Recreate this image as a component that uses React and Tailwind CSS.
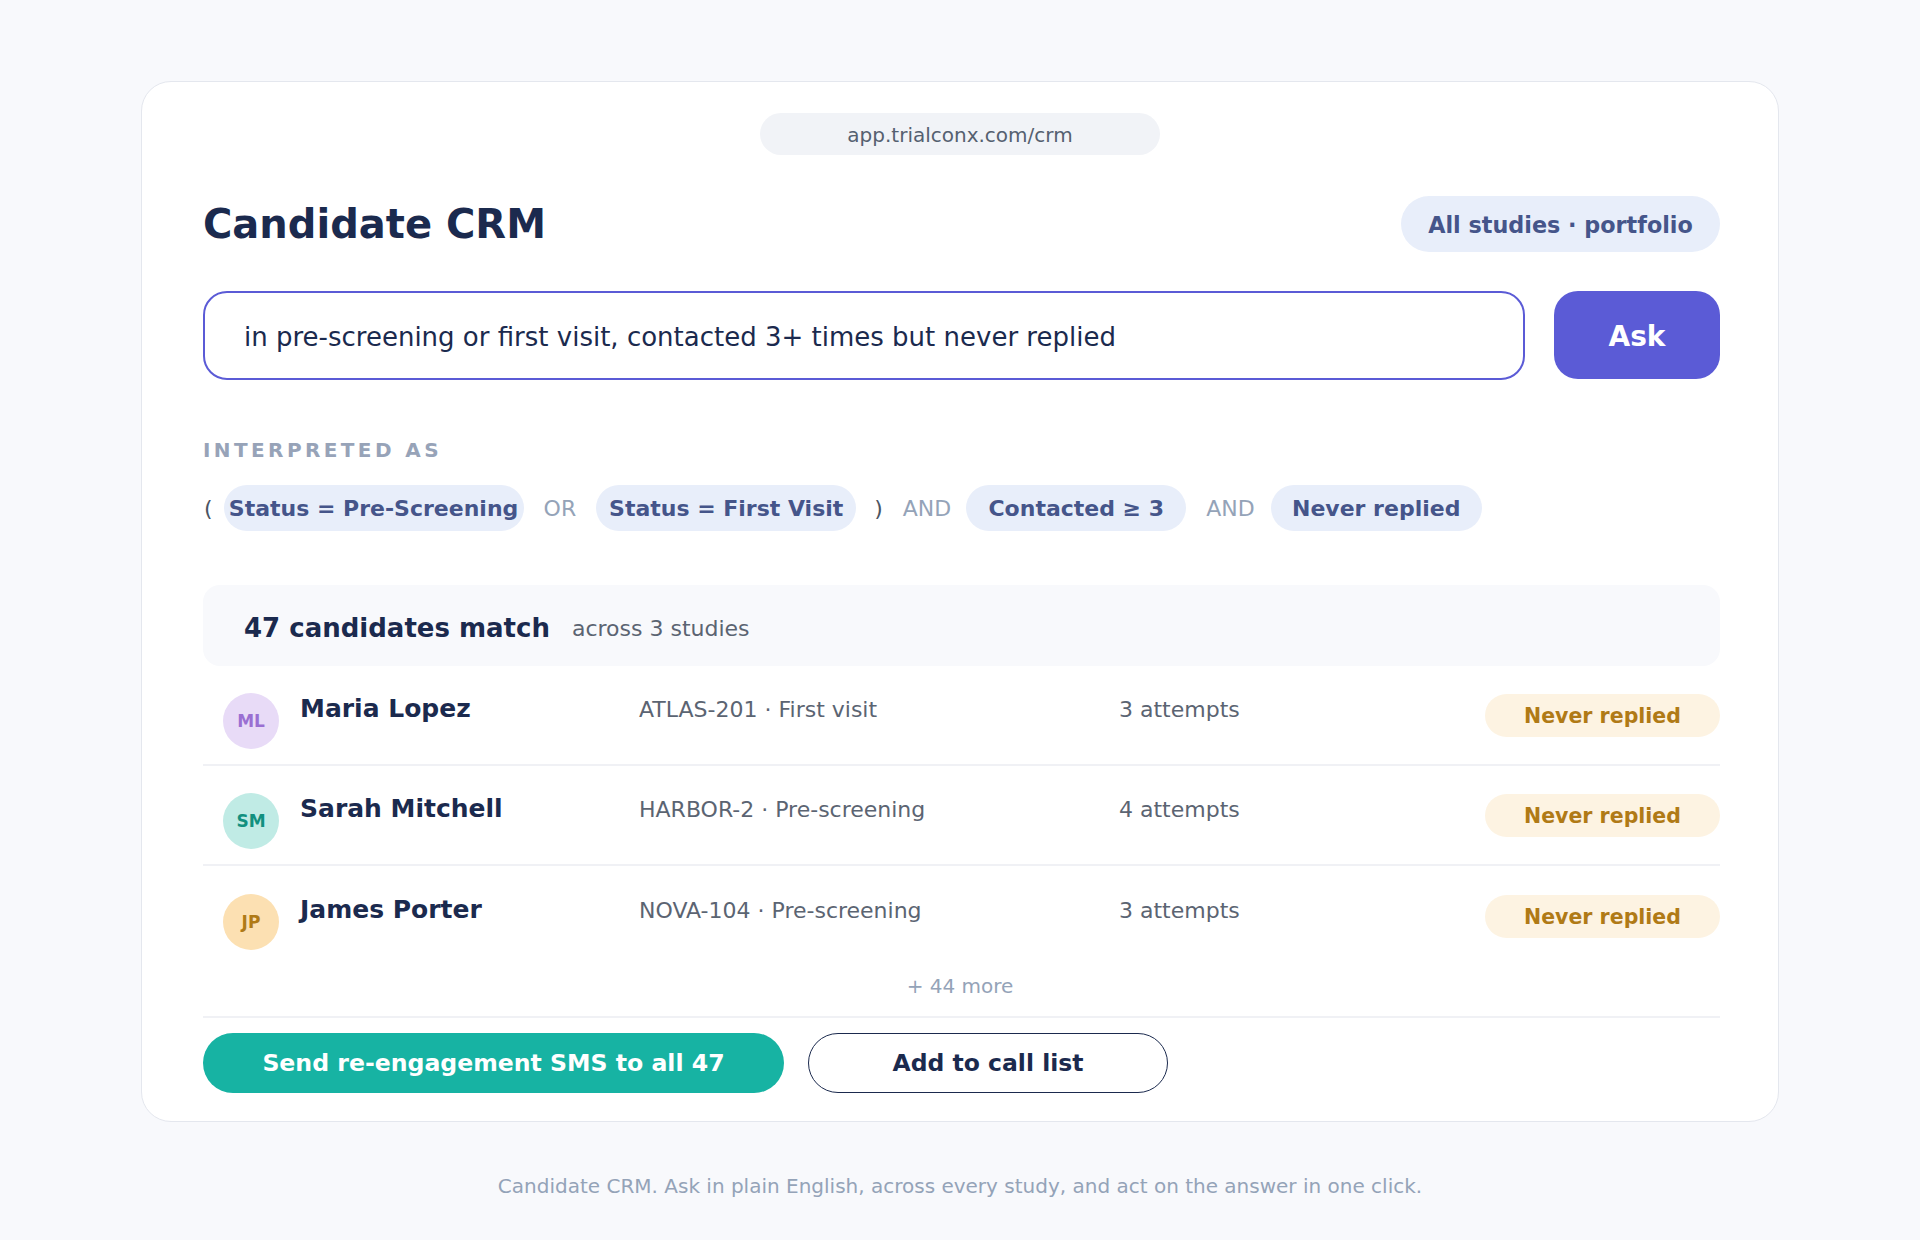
import React from "react";

const rows = [
  { initials: "ML", name: "Maria Lopez", study: "ATLAS-201 · First visit", attempts: "3 attempts", avatar: "bg-[#e8dbf7] text-[#9a6fd2]" },
  { initials: "SM", name: "Sarah Mitchell", study: "HARBOR-2 · Pre-screening", attempts: "4 attempts", avatar: "bg-[#c0ebe5] text-[#12907f]" },
  { initials: "JP", name: "James Porter", study: "NOVA-104 · Pre-screening", attempts: "3 attempts", avatar: "bg-[#fce0b2] text-[#b07a16]" },
];

function Chip({ children, className }) {
  return (
    <div className={`${className} h-[46px] shrink-0 rounded-full bg-[#e8eefa] flex items-center justify-center whitespace-nowrap text-[22px] font-bold text-[#45558a]`}>
      {children}
    </div>
  );
}

function Op({ children }) {
  return <span className="text-[22px] text-[#94a3b8] shrink-0">{children}</span>;
}

export default function App() {
  return (
    <div className="min-h-screen bg-[#f8f9fc] pt-[81px] pb-10 font-['DejaVu_Sans',sans-serif]">
      {/* Card */}
      <div className="mx-auto w-[1638px] bg-white border-[1.5px] border-[#e4e7ee] rounded-[30px] pl-[61px] pr-[58px] pt-[31px] pb-[28px]">
        {/* URL bar */}
        <div className="flex justify-center pr-[3px]">
          <div className="w-[400px] h-[42px] rounded-full bg-[#f1f3f7] flex items-center justify-center pt-[2px] text-[20px] text-[#556070]">
            app.trialconx.com/crm
          </div>
        </div>

        {/* Title row */}
        <div className="mt-[41px] flex items-center justify-between h-[56px]">
          <h1 className="text-[40px] font-bold text-[#1b2a4e] leading-none">Candidate CRM</h1>
          <div className="w-[319px] h-[56px] rounded-full bg-[#e8eefa] flex items-center justify-center pt-[3px] text-[22.3px] font-bold text-[#45558a]">
            All studies · portfolio
          </div>
        </div>

        {/* Query */}
        <div className="mt-[39px] flex gap-[29px]">
          <div className="flex-1 h-[89px] rounded-[24px] border-[2.5px] border-[#5b5bd6] flex items-center pl-[39px] pt-[3px] text-[26px] text-[#1b2a4e]">
            in pre-screening or first visit, contacted 3+ times but never replied
          </div>
          <button className="w-[166px] h-[88px] rounded-[24px] bg-[#5b5bd6] pt-[3px] text-white text-[28px] font-bold">
            Ask
          </button>
        </div>

        {/* Interpreted */}
        <div className="mt-[58px] h-[24px] leading-[24px] text-[20px] font-bold tracking-[3.4px] text-[#97a3b8]">
          INTERPRETED AS
        </div>
        <div className="mt-[23px] flex items-center gap-5">
          <span className="text-[22px] text-[#4b5563] mr-[-9px] ml-[1px]">(</span>
          <Chip className="w-[300px]">Status = Pre-Screening</Chip>
          <Op>OR</Op>
          <Chip className="w-[260px]">Status = First Visit</Chip>
          <span className="text-[22px] text-[#4b5563] ml-[-2px]">)</span>
          <Op>AND</Op>
          <Chip className="w-[220px] ml-[-5px]">Contacted ≥ 3</Chip>
          <Op>AND</Op>
          <Chip className="w-[211px] ml-[-4px]">Never replied</Chip>
        </div>

        {/* Results */}
        <div className="mt-[54px] h-[81px] rounded-[17px] bg-[#f8f9fc] flex items-center pl-[41px] pt-[6px] gap-[22px]">
          <span className="text-[26px] font-bold text-[#1b2a4e]">47 candidates match</span>
          <span className="text-[22px] text-[#5b6472]">across 3 studies</span>
        </div>

        <div>
          {rows.map((r, i) => (
            <div
              key={r.name}
              className={`h-[100px] flex items-center ${i < rows.length - 1 ? "border-b-2 border-[#f0f1f5]" : ""}`}
            >
              <div className="w-[97px] shrink-0 pl-[20px]">
                <div className={`mt-[12px] w-[56px] h-[56px] rounded-full flex items-center justify-center pt-[2px] text-[17px] font-bold ${r.avatar}`}>
                  {r.initials}
                </div>
              </div>
              <div className="w-[339px] shrink-0 mb-[12px] text-[25px] font-bold text-[#1b2a4e]">{r.name}</div>
              <div className="w-[480px] shrink-0 mb-[12px] text-[22px] text-[#5b6472]">{r.study}</div>
              <div className="flex-1 mb-[12px] text-[22px] text-[#5b6472]">{r.attempts}</div>
              <div className="w-[235px] h-[43px] rounded-full bg-[#fdf3e2] flex items-center justify-center pt-[3px] text-[20.5px] font-bold text-[#b07a16]">
                Never replied
              </div>
            </div>
          ))}
        </div>

        <div className="h-[52px] border-b-2 border-[#f0f1f5] pt-[8px] pr-[3px] text-center leading-[24px] text-[20px] text-[#94a3b8]">
          + 44 more
        </div>

        {/* Actions */}
        <div className="mt-[15px] flex gap-[24px]">
          <button className="w-[581px] h-[60px] rounded-full bg-[#17b3a3] pt-[2px] text-white text-[23.6px] font-bold">
            Send re-engagement SMS to all 47
          </button>
          <button className="w-[360px] h-[60px] rounded-full border-[1.5px] border-[#1b2a4e] bg-white pt-[2px] text-[#1b2a4e] text-[23.5px] font-bold">
            Add to call list
          </button>
        </div>
      </div>

      <p className="mt-[52px] text-center text-[20px] leading-[24px] text-[#94a3b8]">
        Candidate CRM. Ask in plain English, across every study, and act on the answer in one click.
      </p>
    </div>
  );
}
